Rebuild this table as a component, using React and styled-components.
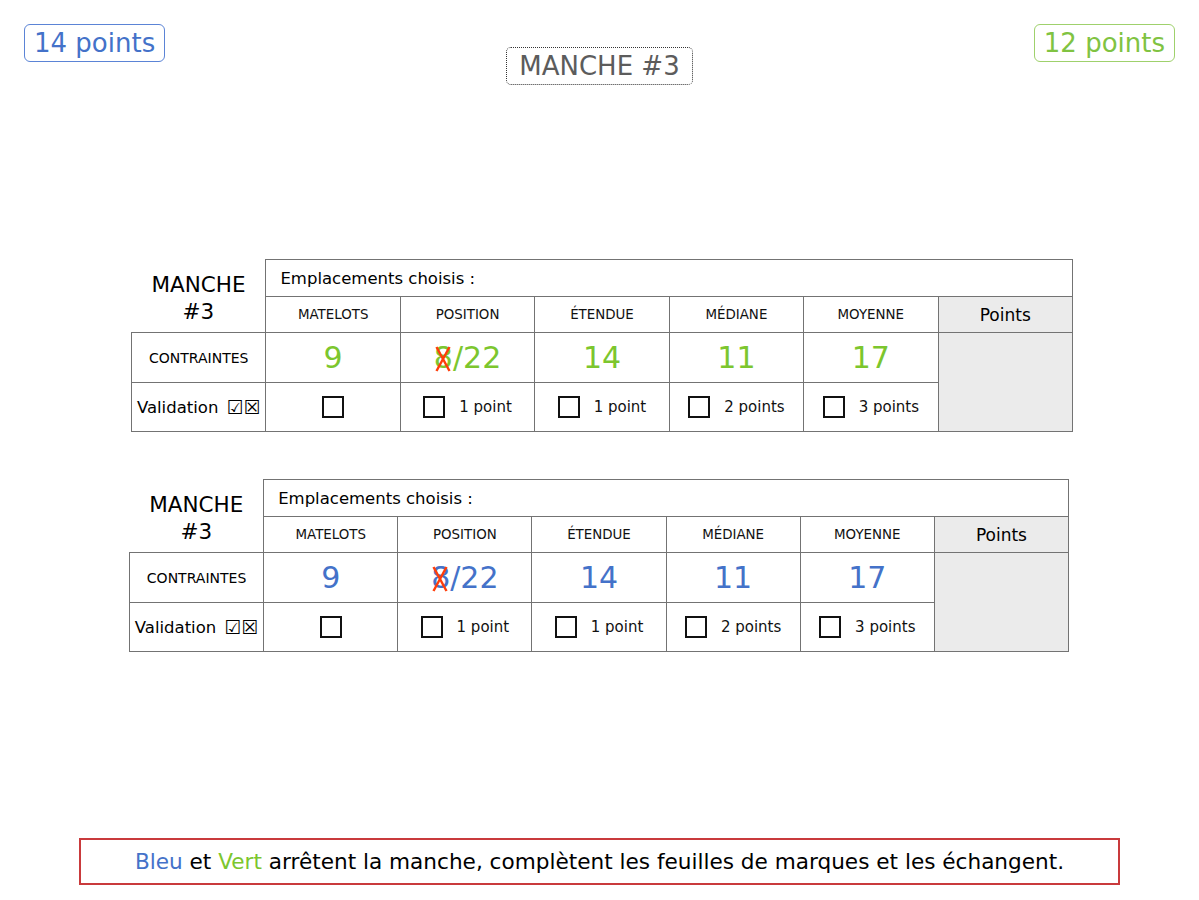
import React from 'react';
import styled, { createGlobalStyle } from 'styled-components';

const BLUE = '#4472c9';
const GREEN = '#7cc62e';

const GlobalStyle = createGlobalStyle`
  body {
    margin: 0;
    background: #fff;
    font-family: 'DejaVu Sans', Verdana, sans-serif;
    color: #111;
  }
`;

const Page = styled.div`
  width: 1199px;
  height: 900px;
  display: flex;
  flex-direction: column;
  overflow: hidden;
`;

const Header = styled.div`
  display: grid;
  grid-template-columns: 1fr auto 1fr;
  align-items: start;
  padding: 24px 24px 0;
`;

const ScoreBadge = styled.div`
  justify-self: ${p => p.$side === 'right' ? 'end' : 'start'};
  border: 1.5px solid ${p => p.$border};
  border-radius: 6px;
  color: ${p => p.$color};
  font-size: 26px;
  line-height: 36px;
  padding: 0 9px;
`;

const RoundTitle = styled.div`
  margin-top: 23px;
  border: 1.5px dotted #333;
  border-radius: 5px;
  color: #5c5c5c;
  font-size: 26px;
  line-height: 36px;
  padding: 0 12px;
`;

const Sheets = styled.div`
  margin-top: 174px;
  display: flex;
  flex-direction: column;
  gap: 47px;
`;

const Sheet = styled.table`
  margin-left: ${p => p.$left}px;
  width: ${p => p.$width}px;
  border-collapse: collapse;
  table-layout: fixed;
`;

const Cell = styled.td`
  border: 1px solid #737373;
  padding: 0;
  text-align: center;
  vertical-align: middle;
  background: ${p => p.$shaded ? '#ebebeb' : '#fff'};
`;

const RoundLabel = styled.td`
  border: none;
  padding: 5px 0 0;
  text-align: center;
  vertical-align: middle;
  font-size: 21.5px;
  line-height: 27px;
  color: #000;
`;

const ChoiceTitle = styled(Cell)`
  text-align: left;
  padding-left: 14px;
  font-size: 16.5px;
  color: #000;
`;

const ColumnHead = styled(Cell)`
  font-size: 13.4px;
  color: #111;
`;

const PointsHead = styled(Cell)`
  font-size: 17px;
  color: #000;
`;

const RowLabel = styled(Cell)`
  font-size: ${p => p.$big ? '16.5px' : '14px'};
  color: #000;
  white-space: nowrap;
`;

const Marks = styled.span`
  font-size: 19px;
  margin-left: 8px;
  vertical-align: -1px;
`;

const Value = styled(Cell)`
  font-size: 30px;
  color: ${p => p.$color};
  line-height: 34px;
`;

const Struck = styled.span`
  position: relative;
  display: inline-block;
`;

const StrikeMark = styled.svg`
  position: absolute;
  left: 1px;
  top: 5px;
  width: 16px;
  height: 26px;
`;

const Check = styled.div`
  display: flex;
  align-items: center;
  justify-content: center;
  gap: 14px;
  font-size: 15px;
  color: #111;
`;

const Box = styled.span`
  display: inline-block;
  width: 18px;
  height: 18px;
  border: 2px solid #111;
`;

const Banner = styled.div`
  margin: 186px 0 0 79px;
  width: 1037px;
  height: 43px;
  border: 2px solid #c93a3c;
  display: flex;
  align-items: center;
  justify-content: center;
  font-size: 21.6px;
  color: #000;
`;

const Colored = styled.span`
  color: ${p => p.$color};
`;

const columns = ['MATELOTS', 'POSITION', 'ÉTENDUE', 'MÉDIANE', 'MOYENNE'];
const rewards = [null, '1 point', '1 point', '2 points', '3 points'];

const Position = () => (
  <>
    <Struck>
      8
      <StrikeMark viewBox="0 0 16 26">
        <line x1="1.5" y1="1" x2="14.5" y2="25" stroke="#ff3d0a" strokeWidth="2.4" />
        <line x1="14.5" y1="1" x2="1.5" y2="25" stroke="#ff3d0a" strokeWidth="2.4" />
      </StrikeMark>
    </Struck>
    /22
  </>
);

const ScoreSheet = ({ color, left, width }) => {
  const values = ['9', <Position key="p" />, '14', '11', '17'];
  return (
    <Sheet $left={left} $width={width}>
      <tbody>
        <tr style={{ height: 37 }}>
          <RoundLabel rowSpan={2}>MANCHE<br />#3</RoundLabel>
          <ChoiceTitle colSpan={6}>Emplacements choisis :</ChoiceTitle>
        </tr>
        <tr style={{ height: 36 }}>
          {columns.map(c => <ColumnHead key={c}>{c}</ColumnHead>)}
          <PointsHead $shaded>Points</PointsHead>
        </tr>
        <tr style={{ height: 50 }}>
          <RowLabel>CONTRAINTES</RowLabel>
          {values.map((v, i) => <Value key={i} $color={color}>{v}</Value>)}
          <Cell rowSpan={2} $shaded />
        </tr>
        <tr style={{ height: 49 }}>
          <RowLabel $big>Validation<Marks>☑☒</Marks></RowLabel>
          {rewards.map((r, i) => (
            <Cell key={i}>
              <Check>
                <Box />
                {r && <span>{r}</span>}
              </Check>
            </Cell>
          ))}
        </tr>
      </tbody>
    </Sheet>
  );
};

export default function App() {
  return (
    <Page>
      <GlobalStyle />
      <Header>
        <ScoreBadge $color={BLUE} $border="#5b84d6">14 points</ScoreBadge>
        <RoundTitle>MANCHE #3</RoundTitle>
        <ScoreBadge $side="right" $color="#80c342" $border="#9fd16c">12 points</ScoreBadge>
      </Header>
      <Sheets>
        <ScoreSheet color={GREEN} left={131} width={942} />
        <ScoreSheet color={BLUE} left={129} width={940} />
      </Sheets>
      <Banner>
        <span>
          <Colored $color={BLUE}>Bleu</Colored> et <Colored $color={GREEN}>Vert</Colored> arrêtent la manche, complètent les feuilles de marques et les échangent.
        </span>
      </Banner>
    </Page>
  );
}
